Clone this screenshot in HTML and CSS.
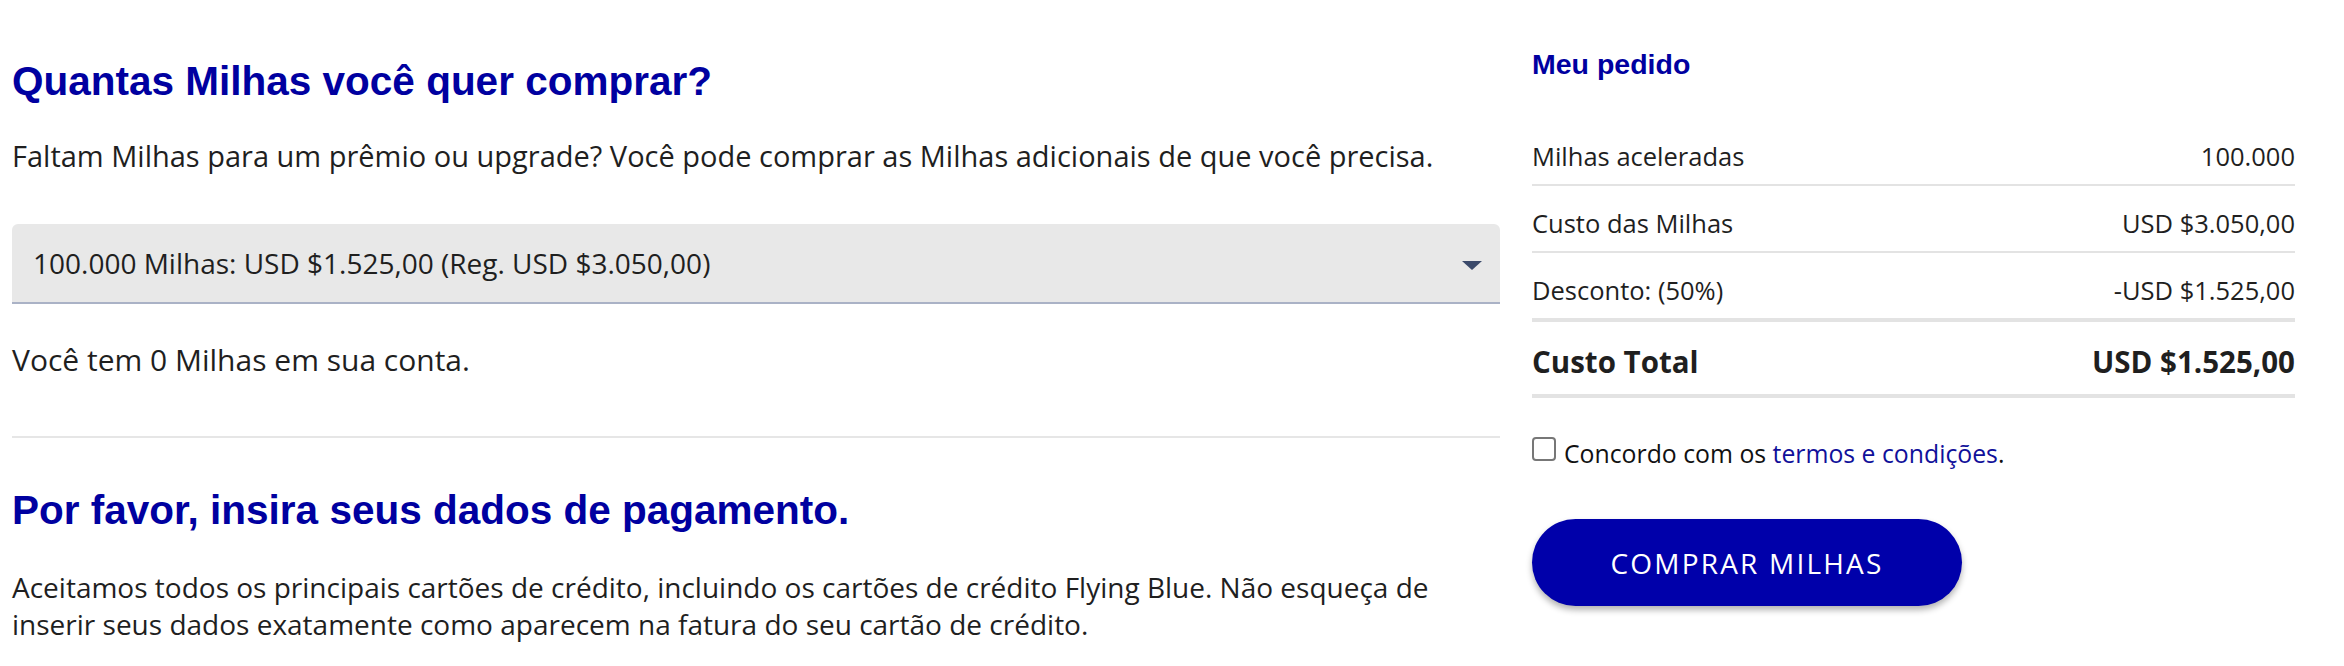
FILE: index.html
```html
<!DOCTYPE html>
<html lang="pt">
<head>
  <meta charset="UTF-8" />
  <meta name="viewport" content="width=device-width, initial-scale=1.0"/>
  <title>Comprar Milhas</title>
  <link rel="stylesheet" href="styles.css">
</head>
<body>

  <div class="page">
    <div class="main-col">
      <h1>Quantas Milhas você quer comprar?</h1>
      <p class="intro">Faltam Milhas para um prêmio ou upgrade? Você pode comprar as Milhas adicionais de que você precisa.</p>

      <div class="select-box">
        <span>100.000 Milhas: USD $1.525,00 (Reg. USD $3.050,00)</span>
        <span class="arrow"></span>
      </div>

      <p class="balance">Você tem 0 Milhas em sua conta.</p>

      <hr class="divider">

      <h2>Por favor, insira seus dados de pagamento.</h2>
      <p class="payment-text">Aceitamos todos os principais cartões de crédito, incluindo os cartões de crédito Flying Blue. Não esqueça de inserir seus dados exatamente como aparecem na fatura do seu cartão de crédito.</p>
    </div>

    <div class="order">
      <h3>Meu pedido</h3>
      <div class="order-row">
        <span>Milhas aceleradas</span>
        <span>100.000</span>
      </div>
      <div class="order-row">
        <span>Custo das Milhas</span>
        <span>USD $3.050,00</span>
      </div>
      <div class="order-row thick">
        <span>Desconto: (50%)</span>
        <span>-USD $1.525,00</span>
      </div>
      <div class="order-row thick total">
        <span>Custo Total</span>
        <span>USD $1.525,00</span>
      </div>

      <label class="terms">
        <input type="checkbox" id="agree" />
        <span>Concordo com os <a href="#">termos e condições</a>.</span>
      </label>

      <button class="buy-btn">COMPRAR MILHAS</button>
    </div>
  </div>

</body>
</html>
```

FILE: styles.css
```css
body {
  margin: 0;
  font-family: 'Open Sans', 'Noto Sans', sans-serif;
  font-size: 29px;
  line-height: 36px;
  color: #1f1f1f;
  background: #fff;
}

.page {
  display: grid;
  grid-template-columns: 1488px 763px;
  column-gap: 32px;
  padding: 57px 0 0 12px;
}

h1, h2, h3 {
  font-family: 'Liberation Sans', Arial, sans-serif;
  font-weight: bold;
  color: #0000a0;
  margin: 0;
}

h1, h2 {
  font-size: 40.5px;
  line-height: 48px;
}

.intro {
  margin: 33px 0 0;
}

.select-box {
  margin-top: 50px;
  height: 78px;
  display: flex;
  align-items: center;
  justify-content: space-between;
  padding: 0 18px 0 21px;
  font-size: 28px;
  background: #e8e8e8;
  border-bottom: 2px solid #aab2c6;
  border-radius: 6px 6px 0 0;
}

.arrow {
  width: 0;
  height: 0;
  border-left: 10px solid transparent;
  border-right: 10px solid transparent;
  border-top: 9px solid #3b4a6b;
  margin-top: 4px;
}

.balance {
  margin: 38px 0 0;
  font-size: 30px;
}

.divider {
  margin: 58px 0 0;
  border: none;
  border-top: 2px solid #e6e6e6;
}

h2 {
  margin-top: 48px;
}

.payment-text {
  margin: 35px 0 0;
  font-size: 28px;
  line-height: 37px;
}

.order {
  font-size: 25.5px;
}

.order h3 {
  font-size: 28.5px;
  line-height: 32px;
  margin-top: -9px;
}

.order-row {
  display: flex;
  justify-content: space-between;
  padding: 19px 0 10px;
  border-bottom: 2px solid #e3e3e3;
}

.order-row:first-of-type {
  margin-top: 39px;
}

.order-row.thick {
  border-bottom-width: 4px;
}

.order-row.total {
  font-weight: bold;
  font-size: 29.5px;
  line-height: 40px;
  padding: 20px 0 12px;
}

.terms {
  display: flex;
  align-items: center;
  margin-top: 37px;
  font-size: 24.8px;
  color: #111;
}

.terms input {
  appearance: none;
  width: 24px;
  height: 24px;
  margin: 0 8px 8px 0;
  border: 2px solid #777;
  border-radius: 4px;
  background: #fff;
}

.terms a {
  color: #10109a;
  text-decoration: none;
}

.buy-btn {
  margin-top: 48px;
  width: 430px;
  height: 87px;
  background: #0000aa;
  color: #fff;
  border: none;
  border-radius: 44px;
  font-family: 'Open Sans', sans-serif;
  font-size: 28px;
  letter-spacing: 2.2px;
  box-shadow: 0 4px 6px rgba(0, 0, 0, 0.3);
  cursor: pointer;
}
```
